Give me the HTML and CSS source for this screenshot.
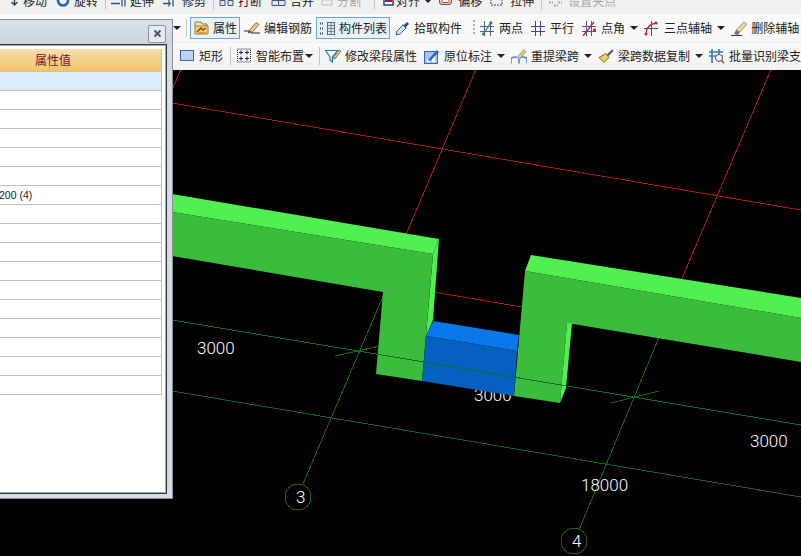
FILE: index.html
```html
<!DOCTYPE html>
<html lang="zh">
<head>
<meta charset="utf-8">
<title>构件属性</title>
<link rel="stylesheet" href="styles.css">
</head>
<body>
<div class="app">
  <header class="toolbars">
    <div class="row1-clip">
      <div class="row row1">
        <svg class="ic w9" viewBox="0 -6 9 14"><path d="M4.5 -6v11M1.5 2l3 3 3-3" fill="none" stroke="#345" stroke-width="1.4"/></svg>
        <span class="lb g4">移动</span>
        <svg class="ic w14 m9" viewBox="0 -6 14 14"><circle cx="7" cy="0" r="5" fill="none" stroke="#2c62c4" stroke-width="2.6"/></svg>
        <span class="lb g4">旋转</span>
        <i class="sep m7"></i>
        <svg class="ic w15 m5" viewBox="0 -6 15 14"><path d="M0 3h9M11 -6v12M14 -6v12" fill="none" stroke="#34507c" stroke-width="1.3"/></svg>
        <span class="lb g4">延伸</span>
        <svg class="ic w15 m9" viewBox="0 -6 15 14"><path d="M0 3h8M10 -6v12M6 -6v12" fill="none" stroke="#34507c" stroke-width="1.3"/></svg>
        <span class="lb g4">修剪</span>
        <i class="sep m7"></i>
        <svg class="ic w15 m5" viewBox="0 -6 15 14"><path d="M1 0h5v5H1zM9 0h5v5H9z" fill="#dfe7f2" stroke="#44597a"/></svg>
        <span class="lb g4">打断</span>
        <svg class="ic w15 m9" viewBox="0 -6 15 14"><path d="M1 0h13v5H1zM7.5 0v5" fill="#dfe7f2" stroke="#44597a"/></svg>
        <span class="lb g4">合并</span>
        <svg class="ic w12 m7" viewBox="0 -6 12 14"><path d="M1 0h10v5H1z" fill="#eee" stroke="#bbb"/></svg>
        <span class="lb off g4">分割</span>
        <i class="sep m13"></i>
        <svg class="ic w11 m8" viewBox="0 -6 11 14"><path d="M1 -4h9v9H1z" fill="#fff" stroke="#2a3f8c" stroke-width="1.5"/><path d="M2 1h7" stroke="#a02030" stroke-width="2"/></svg>
        <span class="lb g2">对齐</span>
        <i class="caret m4"></i>
        <svg class="ic w15 m6" viewBox="0 -6 15 14"><rect x="1.5" y="-3" width="12" height="7" rx="2.5" fill="#f3c9c0" stroke="#555"/><rect x="4" y="-1" width="7" height="3" rx="1" fill="#fff" stroke="#c04040"/></svg>
        <span class="lb g5">偏移</span>
        <svg class="ic w13 m8" viewBox="0 -6 13 14"><path d="M1 -4v9h11v-9" fill="none" stroke="#345" stroke-dasharray="2 1"/></svg>
        <span class="lb g7">拉伸</span>
        <i class="sep m7"></i>
        <svg class="ic w15 m6" viewBox="0 -6 15 14"><path d="M1 2h4M10 2h4M6 5h4" stroke="#aaa" stroke-width="2" stroke-dasharray="2 1"/></svg>
        <span class="lb off g5">设置夹点</span>
      </div>
    </div>

    <div class="row row2">
      <i class="caret"></i>
      <i class="sep m5"></i>
      <div class="btn act m3">
        <svg class="ic w15" viewBox="0 0 15 15"><path d="M1 1h6l1 2h5v3H1z" fill="#e8e2c8" stroke="#8a7a40"/><path d="M1 5h13v8H1z" fill="#f6d070" stroke="#a88030"/><path d="M3 11l4-4 2 2 3-2" fill="none" stroke="#7a4a10" stroke-width="1.5"/><path d="M4 12h8" stroke="#c87820"/></svg>
        <span class="lb g4">属性</span>
      </div>
      <svg class="ic w16 m4" viewBox="0 0 16 15"><path d="M0 10.5h6" stroke="#222"/><path d="M5 10l7-8 3 2-7 8z" fill="#ecc58a" stroke="#8a5a30" stroke-width=".8"/><path d="M5 10l-1 3 3-1z" fill="#333"/><path d="M7 12.5h9" stroke="#222"/></svg>
      <span class="lb g4">编辑钢筋</span>
      <div class="btn act m4">
        <svg class="ic w15" viewBox="0 0 15 15"><path d="M0 2.5h4M0 7.5h4M0 12.5h4" stroke="#444" stroke-width="2.2" stroke-dasharray="1 1"/><rect x="7.5" y="1.5" width="7" height="12" fill="#dfe8f4" stroke="#5a6a80"/><path d="M7 4.5h7M7 7.5h7M7 10.5h7M11 1v13" stroke="#5a6a80" stroke-width=".8"/></svg>
        <span class="lb g4">构件列表</span>
      </div>
      <svg class="ic w15 m5" viewBox="0 0 15 15"><path d="M1 14l1-4 6-6 3 3-6 6z" fill="#d8e8fa" stroke="#2a5cae"/><path d="M7 3l2 1 3-3 2 2-3 3 1 2z" fill="#1e4c9e"/></svg>
      <span class="lb g4">拾取构件</span>
      <i class="grip m11"></i>
      <svg class="ic w14 m5" viewBox="0 0 14 15"><path d="M0 5.5h14M0 10.5h14M4.5 0v15M10.5 0v15" stroke="#3f4f8f" stroke-width=".9"/><path d="M3 14L11 1" stroke="#3a8a3a" stroke-width="1.2"/><circle cx="3.5" cy="13" r="1.5" fill="#2e8a2e"/><circle cx="11" cy="2" r="1.5" fill="#2e8a2e"/></svg>
      <span class="lb g5">两点</span>
      <svg class="ic w14 m8" viewBox="0 0 14 15"><path d="M0 5.5h14M0 10.5h14M4.5 0v15M9.5 0v15" stroke="#3a4a8a"/></svg>
      <span class="lb g5">平行</span>
      <svg class="ic w14 m8" viewBox="0 0 14 15"><path d="M0 5.5h14M0 10.5h14M4.5 0v15M9.5 0v15" stroke="#3a4a8a" stroke-width=".9"/><path d="M1 15L12 1" stroke="#c02030" stroke-width="1.3"/><circle cx="12.5" cy="9" r="1.6" fill="#c02030"/></svg>
      <span class="lb g5">点角</span>
      <i class="caret m5"></i>
      <svg class="ic w14 m6" viewBox="0 0 14 15"><path d="M2 13C2 6 6 3 12 2" fill="none" stroke="#c02030" stroke-width="1.3"/><path d="M0 7.5h14M7.5 0v15" stroke="#3a4a8a"/><circle cx="2" cy="13" r="1.5" fill="#c02030"/><circle cx="12" cy="2" r="1.5" fill="#c02030"/></svg>
      <span class="lb g6">三点辅轴</span>
      <i class="caret m5"></i>
      <svg class="ic w17 m6" viewBox="0 0 17 15"><path d="M0 14.5h11" stroke="#333"/><path d="M3 13l2-4 4 2-2 3z" fill="#8a5ab0"/><path d="M5 9l8-8 3 2-7 8z" fill="#e8d8a8" stroke="#a08858" stroke-width=".8"/></svg>
      <span class="lb g3">删除辅轴</span>
    </div>

    <div class="row row3">
      <svg class="ic w14" viewBox="0 0 14 13"><rect x="0.5" y="1.5" width="13" height="10" fill="#bcd4f4" stroke="#3a66b0"/></svg>
      <span class="lb g5">矩形</span>
      <i class="sep m7"></i>
      <svg class="ic w14 m6" viewBox="0 0 14 14"><rect x="0.5" y="0.5" width="13" height="13" fill="#eef4fd" stroke="#223" stroke-dasharray="1 1"/><path d="M2 4h4M4 2v4M8 4h4M10 2v4M2 10h4M4 8v4M8 10h4M10 8v4" stroke="#223"/></svg>
      <span class="lb g5">智能布置</span>
      <i class="caret m1"></i>
      <i class="sep m6"></i>
      <svg class="ic w16 m5" viewBox="0 0 16 14"><path d="M0.5 1.5h12L7.5 8v5L5 11V8z" fill="none" stroke="#1e7a9e" stroke-width="1.2"/><path d="M8 9l6-8 2 1-6 8z" fill="#e8c890" stroke="#776"/></svg>
      <span class="lb g4">修改梁段属性</span>
      <svg class="ic w16 m7" viewBox="0 0 16 16"><rect x="0.5" y="3.5" width="13" height="12" fill="#a8c8f0" stroke="#3a66b0"/><path d="M3 11h3v3H3zM8 8h3v6H8z" fill="#fff"/><path d="M4 12l9-10 2 2-9 9z" fill="#2a66c0"/></svg>
      <span class="lb g4">原位标注</span>
      <i class="caret m5"></i>
      <svg class="ic w16 m6" viewBox="0 0 16 15"><path d="M0 15v-5q4-3 8 0v5M8 15v-5q4-3 8 0v5" fill="none" stroke="#4a86c8" stroke-width="1.6"/><path d="M6 9l7-8 2 2-7 8z" fill="#e8c890" stroke="#a98"/></svg>
      <span class="lb g4">重提梁跨</span>
      <i class="caret m5"></i>
      <svg class="ic w16 m6" viewBox="0 0 16 15"><path d="M9 6l5-5 1.500 1.500-5 5z" fill="#556"/><path d="M1 9l7-4 3 4-5 5z" fill="#ecd060" stroke="#806a30"/></svg>
      <span class="lb g4">梁跨数据复制</span>
      <i class="caret m5"></i>
      <svg class="ic w16 m6" viewBox="0 0 16 16"><path d="M0 4h14M0 8h14M3 1v14M10 1v6" stroke="#3a76c0" stroke-width="1.6"/><circle cx="10" cy="10" r="3.500" fill="#fff" stroke="#555"/><path d="M12 12l3 3" stroke="#a87030" stroke-width="2"/></svg>
      <span class="lb g4 nowrap">批量识别梁支座</span>
    </div>
  </header>

  <main class="viewport">
    <svg class="scene" viewBox="0 70 801 486">
      <g class="red">
        <line x1="172" y1="103" x2="801" y2="210"/>
        <line x1="482" y1="55" x2="405" y2="237"/>
        <line x1="182" y1="67" x2="172" y2="90"/>
        <line x1="775" y1="60" x2="660" y2="330"/>
        <line x1="433" y1="292" x2="522" y2="307"/>
      </g>
      <g class="green">
        <line x1="303" y1="484" x2="384" y2="294"/>
        <line x1="579" y1="530" x2="662" y2="330"/>
        <line x1="335" y1="356" x2="380" y2="346"/>
        <line x1="611" y1="403" x2="659" y2="391"/>
        <line x1="172" y1="391" x2="801" y2="497"/>
        <circle cx="298" cy="497" r="13"/>
        <circle cx="574" cy="541" r="13"/>
      </g>
      <text class="dim" x="197" y="354">3000</text>
      <text class="dim" x="474" y="401">3000</text>
      <text class="dim" x="750" y="447">3000</text>
      <text class="dim" x="581" y="491">18000</text>
      <text class="axis" x="296" y="503">3</text>
      <text class="axis" x="572" y="547">4</text>

      <polygon class="lit" points="172,194 439,239 433,254 172,212"/>
      <polygon class="lit" points="439,239 433,254 426,336 433,320"/>
      <polygon class="face" points="172,212 433,254 422,381 376,374 383,292 172,256"/>
      <polygon class="lit" points="531,255 801,298 801,318 525,271"/>
      <polygon class="face" points="525,271 801,318 801,362 567,323 560,403 514,396"/>
      <polygon class="lit" points="567,323 572,323 566,388 560,403"/>
      <polygon class="blue-top" points="433,321 519,335 517,351 426,336"/>
      <polygon class="blue-face" points="426,336 517,351 514,396 422,381"/>
      <line class="axis-line" x1="172" y1="320" x2="801" y2="425"/>
    </svg>

    <aside class="panel">
      <div class="panel-title">
        <button class="close" type="button">
          <svg viewBox="0 0 9 9"><path d="M1.500 1.500l6 6M7.500 1.500l-6 6" stroke="#556" stroke-width="2"/></svg>
        </button>
      </div>
      <div class="panel-body">
        <div class="prop-table">
          <div class="prop-head">属性值</div>
          <div class="prop-row first"></div>
          <div class="prop-row"></div>
          <div class="prop-row"></div>
          <div class="prop-row"></div>
          <div class="prop-row"></div>
          <div class="prop-row"></div>
          <div class="prop-row">200 (4)</div>
          <div class="prop-row"></div>
          <div class="prop-row"></div>
          <div class="prop-row"></div>
          <div class="prop-row"></div>
          <div class="prop-row"></div>
          <div class="prop-row"></div>
          <div class="prop-row"></div>
          <div class="prop-row"></div>
          <div class="prop-row"></div>
          <div class="prop-row"></div>
        </div>
      </div>
    </aside>
  </main>
</div>
</body>
</html>
```
FILE: styles.css
```css
html, body { margin: 0; padding: 0; background: #000; }
body { width: 801px; height: 556px; overflow: hidden; font-family: "Noto Sans CJK SC", "Liberation Sans", sans-serif; font-size: 12px; color: #222; }
.app { position: relative; width: 801px; height: 556px; display: flex; flex-direction: column; }

.toolbars { height: 70px; background: #f0f0f0; flex: none; }
.row { display: flex; align-items: center; white-space: nowrap; overflow: hidden; }
.row1-clip { height: 14px; overflow: hidden; }
.row1 { height: 26px; margin-top: -12px; padding-left: 10px; }
.row2 { height: 28px; background: linear-gradient(#fbfbfb, #f7f7f7); padding-left: 173px; }
.row3 { height: 27px; box-sizing: border-box; padding-bottom: 2px; margin-top: 1px; background: linear-gradient(#fafafa, #f2f2f2); padding-left: 180px; }

.ic { display: block; flex: none; }
.w9 { width: 9px; height: 14px; }
.w11 { width: 11px; height: 14px; }
.w12 { width: 12px; height: 14px; }
.w13 { width: 13px; height: 14px; }
.w14 { width: 14px; height: 15px; }
.w15 { width: 15px; height: 15px; }
.w16 { width: 16px; height: 16px; }
.w17 { width: 17px; height: 15px; }

.lb { line-height: 16px; flex: none; }
.off { color: #a8a8a8; }
.nowrap { white-space: nowrap; }

.g2 { margin-left: 2px; } .g3 { margin-left: 3px; } .g4 { margin-left: 4px; }
.g5 { margin-left: 5px; } .g6 { margin-left: 6px; } .g7 { margin-left: 7px; }
.m1 { margin-left: 1px; } .m3 { margin-left: 3px; } .m4 { margin-left: 4px; }
.m5 { margin-left: 5px; } .m6 { margin-left: 6px; } .m7 { margin-left: 7px; }
.m8 { margin-left: 8px; } .m9 { margin-left: 9px; } .m11 { margin-left: 11px; }
.m13 { margin-left: 13px; }

.sep { display: block; flex: none; width: 1px; height: 18px; background: #c4c4c4; }
.caret { display: block; flex: none; width: 0; height: 0; border-left: 4px solid transparent; border-right: 4px solid transparent; border-top: 4px solid #222; }
.grip { display: block; flex: none; width: 2px; height: 16px; background: repeating-linear-gradient(#b0b0b0 0 2px, transparent 2px 4px); }
.btn { display: flex; align-items: center; flex: none; height: 22px; padding: 0 2px 0 3px; border: 1px solid #6aa5d8; background: #e8f1fa; box-sizing: border-box; }

.viewport { position: relative; flex: 1; background: #000; }
.scene { display: block; width: 801px; height: 486px; }
.scene line, .scene circle { shape-rendering: crispEdges; }
.red line { stroke: #a81616; stroke-width: 1; }
.green line, .green circle { stroke: #176217; stroke-width: 1; fill: none; }
.axis-line { stroke: #0f6a24; stroke-width: 1; }
.lit { fill: #4ff04f; }
.face { fill: #3cbc3c; }
.blue-top { fill: #0a78e8; }
.blue-face { fill: #0560c0; }
.dim { fill: #fff; font-family: Roboto, "Liberation Sans", sans-serif; font-weight: 300; font-size: 17px; }
.axis { fill: #fff; font-family: Roboto, "Liberation Sans", sans-serif; font-weight: 300; font-size: 17px; }

.panel { position: absolute; left: -1px; top: -51px; width: 174px; height: 480px; box-sizing: border-box; border: 1px solid #8a8f96; border-left: 0; background: #d4dce6; display: flex; flex-direction: column; padding: 0 6px 5px 0; }
.panel-title { height: 25px; flex: none; box-sizing: border-box; padding: 2px 6px 0 0; display: flex; justify-content: flex-end; align-items: center; background: linear-gradient(#d9e1ea, #ccd5e0); margin-right: -6px; }
.close { width: 18px; height: 18px; padding: 3px; margin: 0; border: 1px solid #8a929c; border-radius: 2px; background: #e6ebf1; display: flex; align-items: center; justify-content: center; }
.close svg { width: 9px; height: 9px; display: block; }
.panel-body { flex: 1; box-sizing: border-box; background: #fff; border: 1px solid #a8a8a8; border-left: 0; outline: 1px solid #33363a; padding: 3px 3px 0 0; }
.prop-table { border-right: 1px solid #bdbdbd; }
.prop-head { height: 23px; padding-right: 54px; box-sizing: border-box; line-height: 21px; text-align: center; color: #7a0f2a; background: linear-gradient(#f8dfae, #f0c46c); border-bottom: 1px solid #d8c090; }
.prop-row { height: 19px; box-sizing: border-box; border-bottom: 1px solid #bdbdbd; background: #fff; font-family: "Liberation Sans", sans-serif; font-size: 10.500px; line-height: 18px; color: #222; }
.prop-row.first { background: #deeefe; }
```
